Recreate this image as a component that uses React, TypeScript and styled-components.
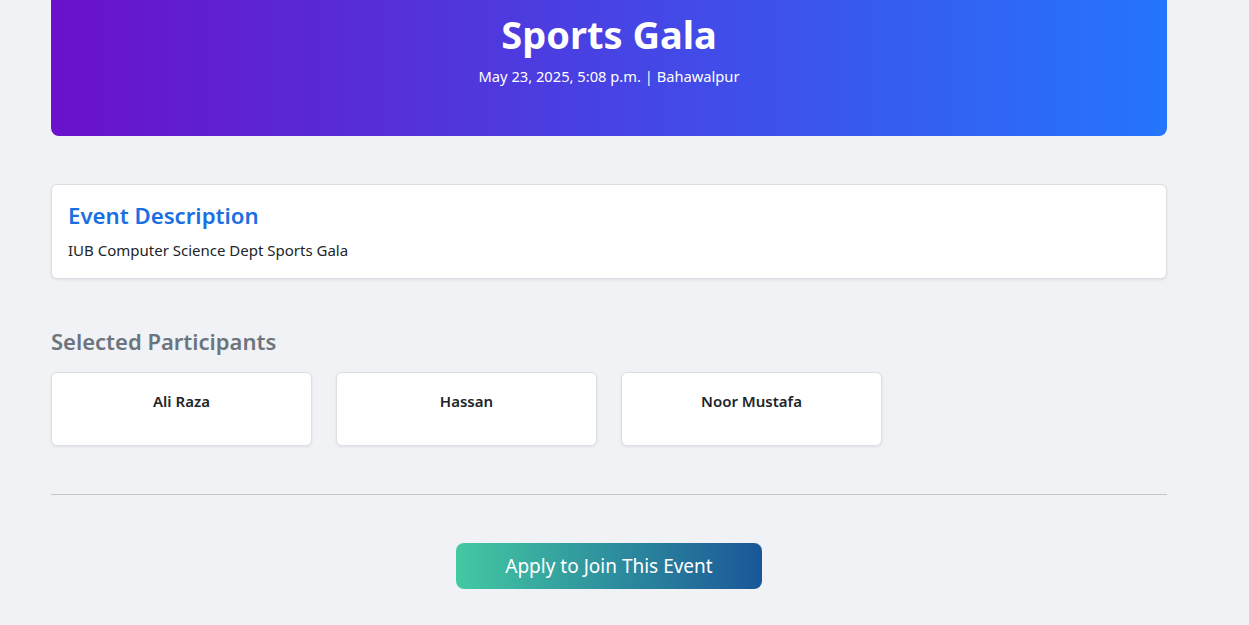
import styled, { createGlobalStyle } from 'styled-components';

const GlobalStyle = createGlobalStyle`
  html, body {
    margin: 0;
    padding: 0;
    background: #f0f2f5;
    font-family: 'Noto Sans', 'Open Sans', sans-serif;
    color: #212529;
    overflow: hidden;
  }
  * { box-sizing: border-box; }
`;

const Page = styled.div`
  width: 1116px;
  margin: 0 0 0 51px;
  padding-bottom: 40px;
`;

const Hero = styled.header`
  margin-top: -37px;
  padding: 48px 16px 32px;
  border-radius: 8px;
  background: linear-gradient(to right, #6a11cb, #2575fc);
  color: #fff;
  text-align: center;
`;

const Title = styled.h1`
  margin: 0 0 7px;
  font-size: 38px;
  line-height: 46px;
  font-weight: 700;
`;

const Meta = styled.p`
  margin: 0 0 16px;
  font-size: 14.7px;
  line-height: 24px;
`;

const Card = styled.section`
  margin-top: 48px;
  padding: 16px;
  background: #fff;
  border: 1px solid #dcdfe3;
  border-radius: 6px;
  box-shadow: 0 1px 3px rgba(0, 0, 0, 0.08);
`;

const CardTitle = styled.h2`
  margin: 0 0 8px;
  color: #1a6fe3;
  font-size: 22.2px;
  line-height: 29px;
  font-weight: 600;
`;

const CardText = styled.p`
  margin: 0;
  font-size: 15px;
  line-height: 24px;
`;

const SectionTitle = styled.h4`
  margin: 48px 0 16px;
  color: #6c757d;
  font-size: 22px;
  line-height: 29px;
  font-weight: 600;
`;

const Grid = styled.div`
  display: grid;
  grid-template-columns: repeat(4, 261px);
  gap: 24px;
`;

const Person = styled.div`
  height: 74px;
  padding: 16px;
  background: #fff;
  border: 1px solid #dcdfe3;
  border-radius: 6px;
  box-shadow: 0 1px 3px rgba(0, 0, 0, 0.08);
  text-align: center;
  font-size: 15px;
  line-height: 24px;
  font-weight: 600;
`;

const Rule = styled.hr`
  margin: 48px 0 48px;
  border: 0;
  border-top: 1px solid #c4c6c9;
`;

const Actions = styled.div`
  display: flex;
  justify-content: center;
`;

const JoinButton = styled.button`
  width: 306px;
  height: 46px;
  border: 0;
  border-radius: 8px;
  background: linear-gradient(to right, #43c9a2, #1a5699);
  color: #fff;
  font-family: inherit;
  font-size: 19px;
  line-height: 30px;
  cursor: pointer;
`;

const participants = ['Ali Raza', 'Hassan', 'Noor Mustafa'];

export default function App() {
  return (
    <>
      <GlobalStyle />
      <Page>
        <Hero>
          <Title>Sports Gala</Title>
          <Meta>May 23, 2025, 5:08 p.m. | Bahawalpur</Meta>
        </Hero>
        <Card>
          <CardTitle>Event Description</CardTitle>
          <CardText>IUB Computer Science Dept Sports Gala</CardText>
        </Card>
        <SectionTitle>Selected Participants</SectionTitle>
        <Grid>
          {participants.map((name) => (
            <Person key={name}>{name}</Person>
          ))}
        </Grid>
        <Rule />
        <Actions>
          <JoinButton>Apply to Join This Event</JoinButton>
        </Actions>
      </Page>
    </>
  );
}
